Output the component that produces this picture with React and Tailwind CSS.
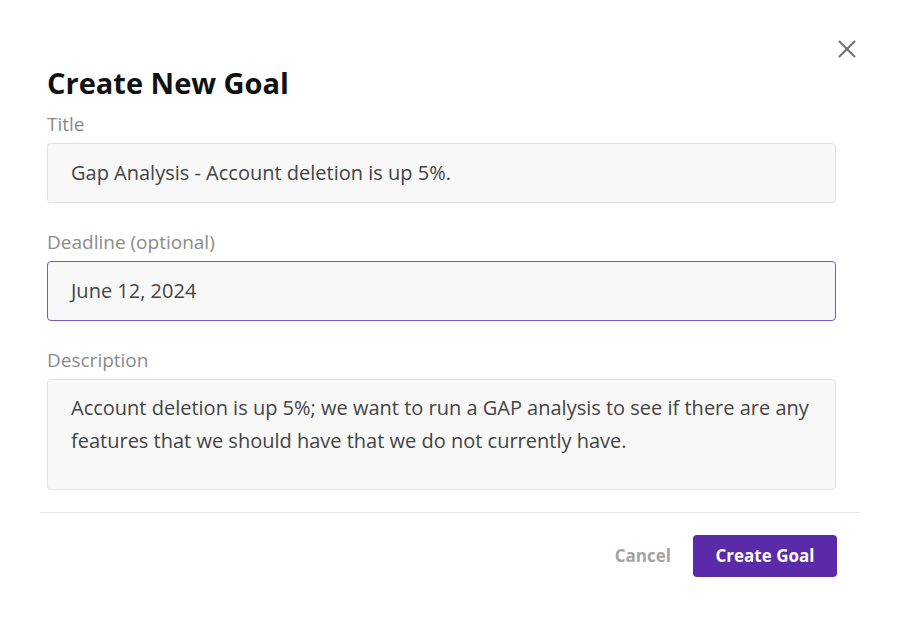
import React from "react";
import { X } from "lucide-react";

const font = { fontFamily: "'Open Sans', Lato, sans-serif" };

const Field = ({ label, children }) => (
  <div className="flex flex-col">
    <label className="text-[19px] leading-[24px] text-[#8a8a8a] mb-[7px]">{label}</label>
    {children}
  </div>
);

export default function App() {
  return (
    <div className="w-[900px] h-[619px] bg-white relative" style={font}>
      <button className="absolute left-[832px] top-[34px] text-[#707070]" aria-label="Close">
        <X size={30} strokeWidth={1.6} />
      </button>

      <div className="pl-[47px] pr-[64px] pt-[66px]">
        <h1 className="text-[29px] leading-[34px] font-bold text-[#111] mb-[12px]">Create New Goal</h1>

        <Field label="Title">
          <div className="h-[60px] bg-[#f8f8f8] border border-[#e2e2e2] rounded-[4px] px-[23px] flex items-center text-[20px] text-[#444]">
            Gap Analysis - Account deletion is up 5%.
          </div>
        </Field>

        <div className="h-[27px]" />
        <Field label="Deadline (optional)">
          <div className="h-[60px] bg-[#f8f8f8] border-[1.5px] border-[#7b55c7] rounded-[4px] px-[23px] flex items-center text-[20px] text-[#444]">
            June 12, 2024
          </div>
        </Field>

        <div className="h-[27px]" />
        <Field label="Description">
          <div className="h-[111px] bg-[#f8f8f8] border border-[#e2e2e2] rounded-[4px] px-[23px] pt-[11px] text-[20px] leading-[33px] text-[#444]">
            Account deletion is up 5%; we want to run a GAP analysis to see if there are any features that we should have that we do not currently have.
          </div>
        </Field>
      </div>

      <div className="mx-[40px] mt-[22px] border-t border-[#e8e8e8]" />

      <div className="flex justify-end items-center gap-[22px] pr-[63px] pt-[22px]">
        <button className="text-[17px] font-bold text-[#a3a3a3]">Cancel</button>
        <button className="h-[42px] w-[144px] rounded-[4px] bg-[#5b2aa8] text-white text-[17px] font-bold">
          Create Goal
        </button>
      </div>
    </div>
  );
}
